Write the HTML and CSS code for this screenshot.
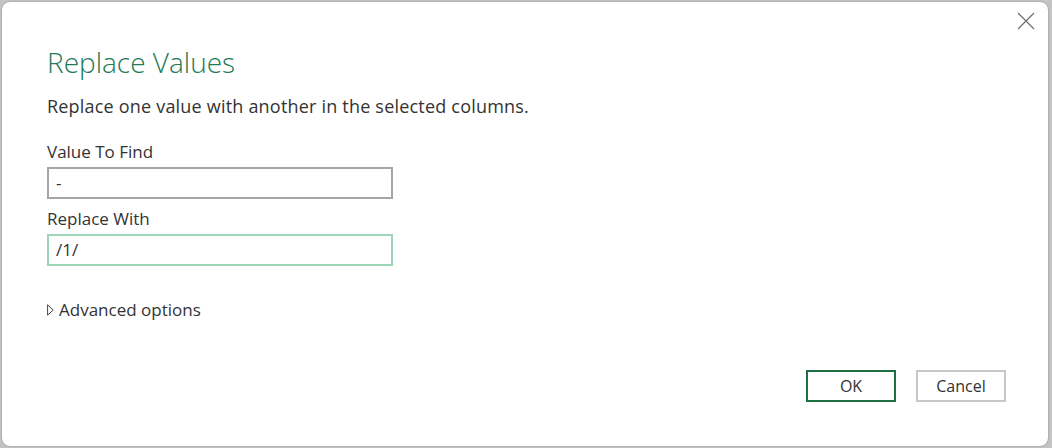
FILE: index.html
```html
<!DOCTYPE html>
<html lang="en">
<head>
  <meta charset="UTF-8">
  <title>Replace Values</title>
  <link rel="stylesheet" href="styles.css">
</head>
<body>
  <div class="backdrop">
    <div class="behind-title">PROPERTIES</div>
  </div>

  <div class="dialog">
    <button class="close" aria-label="Close">
      <svg width="18" height="18" viewBox="0 0 18 18">
        <path d="M1 1 L17 17 M17 1 L1 17" stroke="#6a6a6a" stroke-width="1.1" fill="none"/>
      </svg>
    </button>

    <h1 class="title">Replace Values</h1>
    <p class="desc">Replace one value with another in the selected columns.</p>

    <label class="label">Value To Find</label>
    <div class="field">-</div>

    <label class="label">Replace With</label>
    <div class="field active">/1/</div>

    <div class="advanced">
      <svg class="caret" width="7" height="12" viewBox="0 0 7 12">
        <path d="M0.6 0.8 L6.2 6 L0.6 11.2 Z" stroke="#444" stroke-width="1" fill="none"/>
      </svg>
      <span>Advanced options</span>
    </div>

    <div class="footer">
      <button class="btn primary">OK</button>
      <button class="btn">Cancel</button>
    </div>
  </div>
</body>
</html>
```

FILE: styles.css
```css
html, body {
  margin: 0; padding: 0;
  height: 100%;
  overflow: hidden;
}
body {
  background: #c4c4c4;
  font-family: "Open Sans", "Noto Sans", sans-serif;
  color: #333;
  position: relative;
}
.backdrop {
  position: absolute;
  top: 0; left: 0;
  width: 100%; height: 100%;
}
.behind-title {
  position: absolute;
  top: -16px; left: 727px;
  font-size: 15px;
  font-weight: bold;
  color: #2f6b4a;
  letter-spacing: 1px;
}
.dialog {
  position: relative;
  margin: 2px 4px 0 2px;
  height: 444px;
  background: white;
  border-radius: 8px;
  box-shadow: 0 0 2px rgba(0,0,0,0.35);
  padding: 0 42px 0 45px;
  box-sizing: border-box;
  display: flex;
  flex-direction: column;
}
.close {
  position: absolute;
  top: 8px; right: 11px;
  width: 22px; height: 22px;
  padding: 0;
  border: none;
  background: none;
  display: flex;
  align-items: center;
  justify-content: center;
}
.title {
  margin: 42px 0 0;
  font-size: 28px;
  font-weight: 300;
  color: #1f7a55;
  line-height: 36px;
}
.desc {
  margin: 14px 0 0;
  font-size: 18px;
  letter-spacing: 0.2px;
  line-height: 24px;
}
.label {
  display: block;
  margin-top: 23px;
  font-size: 17px;
  line-height: 22px;
}
.label + .field { margin-top: 4px; }
.field + .label { margin-top: 9px; }
.field {
  width: 346px;
  height: 32px;
  box-sizing: border-box;
  border: 2px solid #a6a6a6;
  padding: 0 7px;
  font-size: 17px;
  line-height: 28px;
}
.field.active {
  border-color: #9fd4b8;
}
.advanced {
  margin-top: 33px;
  display: flex;
  align-items: center;
  gap: 5px;
  font-size: 17px;
  line-height: 22px;
}
.caret { margin-left: 0; }
.footer {
  margin-top: auto;
  margin-bottom: 44px;
  display: flex;
  justify-content: flex-end;
  gap: 20px;
}
.btn {
  width: 90px;
  height: 32px;
  box-sizing: border-box;
  border: 2px solid #c8c8c8;
  background: white;
  font-family: inherit;
  font-size: 16px;
  color: #333;
  padding: 0;
}
.btn.primary {
  border-color: #1e6f44;
}
```
